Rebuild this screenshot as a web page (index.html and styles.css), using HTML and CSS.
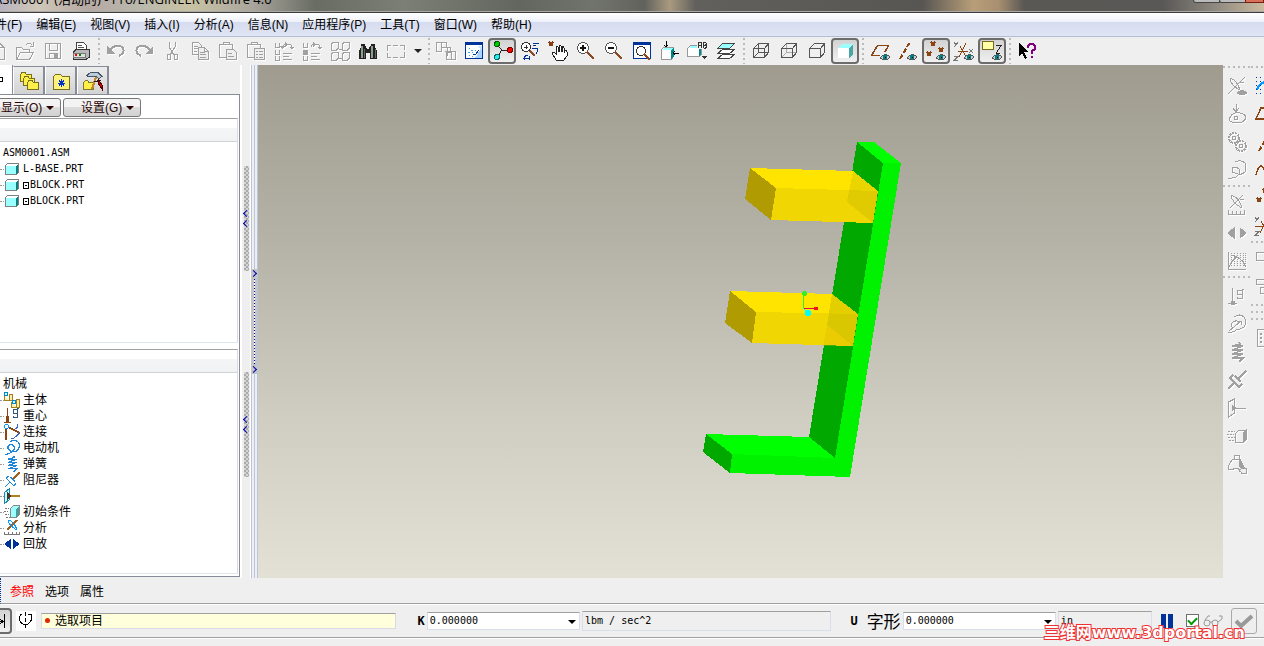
FILE: index.html
```
<!DOCTYPE html>
<html lang="zh-CN">
<head>
    <meta charset="UTF-8">
    <meta name="viewport" content="width=device-width, initial-scale=1.0">
    <title>ASM0001 (活动的) - Pro/ENGINEER Wildfire 4.0</title>
    <link rel="stylesheet" href="styles.css">
</head>
<body>
    <!-- Shared symbols -->
    <svg class="symbols" aria-hidden="true">
        <symbol id="eye" viewBox="0 0 10 7"><path d="M0 4Q5-2 10 3Q6 8 0 4Z" fill="#ccc" stroke="#555"/><path d="M3 1h4v4H3z" fill="#008080"/><path d="M5 3h1v1H5z" fill="#000"/></symbol>
        <symbol id="part" viewBox="0 0 14 12"><path d="M.5 2.500L2.500.5H13.500V9.500L11.500 11.500H.5z" fill="#fff" stroke="#808080"/><path d="M1 3h10v8H1z" fill="#9ff" /><path d="M11 3l2-2v8l-2 2z" fill="#0a7f80"/></symbol>
        <symbol id="folder" viewBox="0 0 12 10"><path d="M.5 9.500V2.500L2 .5H5L6.500 2.500H11.500V9.500z" fill="#ffef4a" stroke="#77701a"/></symbol>
        <symbol id="damper" viewBox="0 0 20 20"><path d="M1 19L8 12M6 5L3 8L12 17L15 14M8 6L14 12M11 9L19 1" fill="none" stroke="currentColor" stroke-width="1.500"/></symbol>
        <symbol id="spring" viewBox="0 0 20 20"><path d="M12 0L13 2L5 4H16L5 8H16L5 12H16L5 16H16L12 20" fill="none" stroke="currentColor" stroke-width="1.500"/></symbol>
        <symbol id="motor" viewBox="0 0 20 20"><path d="M8 2Q14-1 18 3Q21 8 17 13Q13 16 9 14Q4 12 5 8Q8 4 12 7Q15 11 11 13Q8 18 1 18" fill="none" stroke="currentColor" stroke-width="1.500"/></symbol>
    </svg>

    <header class="title-bar">
        <span class="title-text">ASM0001 (活动的) - Pro/ENGINEER Wildfire 4.0</span>
        <span class="window-buttons"><i></i><i></i><i></i></span>
    </header>

    <nav class="menu-bar">
        <a href="#">文件(F)</a>
        <a href="#">编辑(E)</a>
        <a href="#">视图(V)</a>
        <a href="#">插入(I)</a>
        <a href="#">分析(A)</a>
        <a href="#">信息(N)</a>
        <a href="#">应用程序(P)</a>
        <a href="#">工具(T)</a>
        <a href="#">窗口(W)</a>
        <a href="#">帮助(H)</a>
    </nav>

    <div class="toolbar">
        <button class="tool off" aria-label="新建"><svg viewBox="0 0 20 20"><path d="M4 1.500h8l5 5v12H4zM12 1.500v5h5"/></svg></button>
        <button class="tool off" aria-label="打开"><svg viewBox="0 0 20 20"><path d="M1.500 18.500v-12h5l2 2h6v3M1.500 18.500l4-7h13l-4 7zM11 4q3-3 6 0M18.500 1v4h-4"/></svg></button>
        <button class="tool off" aria-label="保存"><svg viewBox="0 0 20 20"><path d="M2.500 2.500h15v15h-15zM6 2.500v7h8v-7M6 17.500v-5h8v5"/><path d="M11 13h3v4h-3z" fill="#a0a0a0"/></svg></button>
        <button class="tool" aria-label="打印"><svg viewBox="0 0 20 20"><path d="M5.500 9V1.500h7l3 3V9" fill="#fff" stroke="#444"/><path d="M7 4.500h4M7 6.500h6" stroke="#555"/><path d="M2.500 11l3-3h13v8l-3 2h-13z" fill="#b8b8b8" stroke="#333"/><path d="M2 12h12v4H2z" fill="#e0e0e0" stroke="#777"/><path d="M4 14h2" stroke="red" stroke-width="2"/><path d="M8 14h2" stroke="#080" stroke-width="2"/></svg></button>
        <span class="grip"></span>
        <button class="tool off" aria-label="撤消"><svg viewBox="0 0 20 20"><path d="M4 9Q8 4 14 5Q19 7 17 12L13 15" stroke-width="2"/><path d="M1 5v8h8z" fill="#a0a0a0" stroke="none"/></svg></button>
        <button class="tool off" aria-label="重做"><svg viewBox="0 0 20 20"><path d="M16 9Q12 4 6 5Q1 7 3 12L7 15" stroke-width="2"/><path d="M19 5v8h-8z" fill="#a0a0a0" stroke="none"/></svg></button>
        <button class="tool off" aria-label="剪切"><svg viewBox="0 0 20 20"><path d="M7 1v5l5 8M13 1v5l-5 8M5.500 13.500h3v5h-3zM12.500 13.500h3v5h-3z"/></svg></button>
        <button class="tool off" aria-label="复制"><svg viewBox="0 0 20 20"><path d="M2.500 1.500h6l3 3v9h-9zM4 5h4M4 7.500h4M4 10h3"/><path d="M8.500 6.500h6l4 4v8h-10zM10 11h5M10 13.500h6M10 16h6M14.500 6.500v4h4" fill="#efefef"/></svg></button>
        <button class="tool off" aria-label="粘贴"><svg viewBox="0 0 20 20"><path d="M1.500 3.500h13v13h-13zM5 3V1h6v2"/><path d="M8.500 8.500h7l3 3v7h-10zM10 12h4M10 15h6" fill="#efefef"/></svg></button>
        <button class="tool off" aria-label="选择性粘贴"><svg viewBox="0 0 20 20"><path d="M1.500 3.500h13v13h-13zM5 3V1h6v2"/><path d="M8.500 7.500h10v11h-10zM10 10h2M13 10h4M10 13h2M13 13h4M10 16h2M13 16h4" fill="#efefef"/></svg></button>
        <button class="tool off" aria-label="再生"><svg viewBox="0 0 20 20"><path d="M1 2v4h4V2M1 9v4h4V9M1 15v4h4v-4M9 12h9M9 15h6M9 18h9M9 6q1-4 4-3M14 3q4 0 4 4"/><path d="M11 1l3 2-3 3zM15 6h5l-2 3zM6 5h5l-3 3z" fill="#a0a0a0" stroke="none"/></svg></button>
        <button class="tool off" aria-label="再生管理器"><svg viewBox="0 0 20 20"><path d="M1 2v4h4V2M1 9v4h4V9M1 15v4h4v-4M9 12h9M9 15h6M9 18h9M9 6q1-4 4-3M14 3q4 0 4 4"/><path d="M11 1l3 2-3 3zM15 6h5l-2 3zM1 9h4v4H1z" fill="#a0a0a0" stroke="none"/></svg></button>
        <button class="tool off" aria-label="重复元件"><svg viewBox="0 0 20 20"><path d="M1.500 3l2-2h5v6l-2 2h-5zM12.500 3l2-2h5v6l-2 2h-5zM1.500 13l2-2h5v6l-2 2h-5zM12.500 13l2-2h5v6l-2 2h-5zM9 8h3M9 17h3"/></svg></button>
        <button class="tool" aria-label="查找"><svg viewBox="0 0 20 20"><path d="M3 3h4v2h1l1 3h2l1-3h1V3h4v3l2 4v8h-7v-6H8v6H1v-8l2-4z" fill="#222"/><path d="M4 5v12M14 5v12" stroke="#8aa08a" stroke-width="2"/><path d="M6 8v9M17 8v9" stroke="#666"/></svg></button>
        <button class="tool off" aria-label="选取"><svg viewBox="0 0 20 20"><path d="M1 4.500h4M7 4.500h5M14 4.500h4.500v4M18.500 11v5.500H14M12 16.500H7M5 16.500H1.500V12M1.500 10V4"/></svg></button>
        <button class="tool-caret" aria-label="选取选项"><span class="caret"></span></button>
        <span class="grip"></span>
        <button class="tool off" aria-label="主体"><svg viewBox="0 0 20 20"><path d="M.5 1.500h5v9h-5zM5.500 1.500h5v5h-5zM9 10.500h5v-4h-3v8M14 10.500h5v8h-9v-7h5v7"/></svg></button>
        <button class="tool" aria-label="草绘视图"><svg viewBox="0 0 20 20"><path d="M1.500 1.500h17v16h-17z" fill="#fff" stroke="#039" /><path d="M11 17L18 6v11z" fill="#a8d4ff"/><path d="M2 5h16v5L14 5z" fill="#c8e4ff"/><path d="M1 1h18v3H1z" fill="#003399"/><path d="M5 7h1M7 9h2M4 11h2M8 11h1M11 9h1M5 14h1M8 15h1" stroke="#3ad"/><path d="M9 14l3-1 3-4" fill="none" stroke="#039"/></svg></button>
        <button class="tool pressed" aria-label="旋转中心"><svg viewBox="0 0 20 20"><path d="M5 4l5 5M9 9.500h7M9 10l-4 7" stroke="#222"/><circle cx="5" cy="3" r="2.500" fill="#0c0" stroke="#050"/><circle cx="18" cy="9" r="2.500" fill="#f00" stroke="#700"/><circle cx="5" cy="16" r="2.500" fill="#2ee" stroke="#166"/></svg></button>
        <button class="tool" aria-label="定向模式"><svg viewBox="0 0 20 20"><circle cx="6" cy="6" r="4.500" fill="#fff" stroke="#333"/><path d="M6 4v4M4 6h4" stroke="#333"/><path d="M10 10l5 5" stroke="#8b4a24" stroke-width="2"/><path d="M13 2.500h6M13 4.500h3M12 7.500h5q2 2-1 5M8 14q-5 1-3 5M3 17h6M9 19v-4" fill="none" stroke="#039"/></svg></button>
        <button class="tool" aria-label="平移"><svg viewBox="0 0 20 20"><path d="M8 19L4 12q1-2 4 1V6q1-2 2 0l1 5V5q1-2 2 0l1 6V6q2-1 2 1v5l1-3q2 0 2 2v4l-3 4z" fill="#fff" stroke="#222"/><path d="M1 1l4 4M5 1L1 5" stroke="#8b3a10" stroke-width="1.500"/></svg></button>
        <button class="tool" aria-label="放大"><svg viewBox="0 0 20 20"><circle cx="7" cy="7" r="5.500" fill="#fff" stroke="#555"/><path d="M4 7h6M7 4v6" stroke="#111" stroke-width="2"/><path d="M11 11l7 7" stroke="#8b4a24" stroke-width="2"/></svg></button>
        <button class="tool" aria-label="缩小"><svg viewBox="0 0 20 20"><circle cx="7" cy="7" r="5.500" fill="#fff" stroke="#555"/><path d="M4 7h6" stroke="#111" stroke-width="2"/><path d="M11 11l7 7" stroke="#8b4a24" stroke-width="2"/></svg></button>
        <button class="tool" aria-label="重新调整"><svg viewBox="0 0 20 20"><path d="M1.500 1.500h17v16h-17z" fill="#fff" stroke="#039"/><path d="M1 1h18v3H1z" fill="#003399"/><circle cx="9" cy="10" r="4.500" fill="#fff" stroke="#333"/><path d="M12 13l6 6" stroke="#8b4a24" stroke-width="2"/></svg></button>
        <button class="tool" aria-label="重定向"><svg viewBox="0 0 20 20"><path d="M1.500 8.500l2-2h10v9l-2 3h-10z" fill="#fff" stroke="#999"/><path d="M4 7h9l-1 2H2z" fill="#9ff"/><path d="M11 9l3-3v9l-3 3z" fill="#088"/><path d="M6 0v6M4 4l2 2 2-2M19 12h-6M15 10l-2 2 2 2" fill="none" stroke="#000"/></svg></button>
        <button class="tool" aria-label="已命名视图"><svg viewBox="0 0 20 20"><path d="M-.5 7.500l3-3h11v9l-2 2H-.5z" fill="#fff" stroke="#999"/><path d="M2 6h9" stroke="#9ff" stroke-width="2"/><path d="M11 7h2v6l-2 2z" fill="#088"/><path d="M9 0h11v8H9z" fill="#efefef"/><path d="M10.500 7V2l1-1h1l1 1v5M10.500 4.500h3M15.500 6.500v-5h2l1 1v1l-1 .5 1 1v1l-1 1h-2M15.500 4h2" fill="none" stroke="#333"/><path d="M14 15h5l-2.500 3z" fill="#333"/></svg></button>
        <button class="tool" aria-label="层"><svg viewBox="0 0 20 20"><path d="M1.500 17.500l5-4h12l-5 4z" fill="#fff" stroke="#444"/><path d="M1.500 12.500l5-4h12l-5 4z" fill="#fff" stroke="#444"/><path d="M1.500 7.500l5-5h12l-5 5z" fill="#9ff" stroke="#444"/></svg></button>
        <span class="grip"></span>
        <button class="tool" aria-label="线框"><svg viewBox="0 0 20 20"><path d="M2.500 7.500h11v9h-11zM7.500 2.500h10v9h-10zM2.500 7.500l5-5M13.500 7.500l4-5M13.500 16.500l4-5M2.500 16.500l5-5" fill="none" stroke="#555"/></svg></button>
        <button class="tool" aria-label="隐藏线"><svg viewBox="0 0 20 20"><path d="M7.500 3v8.500h10M2.500 16.500l5-5" fill="none" stroke="#aaa"/><path d="M2.500 7.500h11v9h-11zM2.500 7.500l5-5h10v9l-4 5M13.500 7.500l4-5" fill="none" stroke="#555"/></svg></button>
        <button class="tool" aria-label="无隐藏线"><svg viewBox="0 0 20 20"><path d="M2.500 7.500h11v9h-11zM2.500 7.500l5-5h10v9l-4 5M13.500 7.500l4-5" fill="none" stroke="#555"/></svg></button>
        <button class="tool pressed" aria-label="着色"><svg viewBox="0 0 20 20"><path d="M3 7h11v10H3z" fill="#fff"/><path d="M3 7l4-4h11l-4 4z" fill="#9ff"/><path d="M14 7l4-4v10l-4 4z" fill="#4aa6a6"/></svg></button>
        <span class="grip"></span>
        <button class="tool" aria-label="平面显示"><svg viewBox="0 0 20 20"><path d="M10 14.500H1.500l6-10h11L15 11" fill="none" stroke="#8b4513" stroke-width="1.500"/><use href="#eye" x="10" y="13" width="10" height="7"/></svg></button>
        <button class="tool" aria-label="轴显示"><svg viewBox="0 0 20 20"><path d="M2 18L12 1" stroke="#8b4513" stroke-width="2" stroke-dasharray="5 2"/><use href="#eye" x="9" y="13" width="10" height="7"/></svg></button>
        <button class="tool pressed" aria-label="点显示"><svg viewBox="0 0 20 20"><path d="M5 1l4 4M9 1L5 5M1 11l4 4M5 11l-4 4M13 7l4 4M17 7l-4 4" stroke="#8b4513" stroke-width="1.500"/><use href="#eye" x="10" y="13" width="10" height="7"/></svg></button>
        <button class="tool" aria-label="坐标系显示"><svg viewBox="0 0 20 20"><path d="M4 10.500h10M6 5l6 11M12 2L5 16" stroke="#8b4513"/><path d="M0 1l2 3 2-3M2 4l-2 2M0 15.500h4l-4 4h4M15 8l4 4M19 8l-4 4" fill="none" stroke="#777"/><use href="#eye" x="10" y="13" width="10" height="7"/></svg></button>
        <button class="tool pressed" aria-label="注释显示"><svg viewBox="0 0 20 20"><path d="M.5.5h11v8H.5z" fill="#ffffa8" stroke="#776a1a"/><path d="M14 4.500h5l-5 8M14 12.500h4" fill="none" stroke="#222"/><use href="#eye" x="10" y="13" width="10" height="7"/></svg></button>
        <span class="grip"></span>
        <button class="tool" aria-label="上下文帮助"><svg viewBox="0 0 20 20"><path d="M2 2v13l3-3 3 6 2-1-3-6h4z" fill="#000"/><path d="M11 7V5l2-2h3l2 2v3l-3 2v3M15 15v2" fill="none" stroke="#800080" stroke-width="2"/></svg></button>
    </div>

    <main class="workspace">
        <aside class="navigator">
            <div class="nav-tabs">
                <button class="nav-tab active" aria-label="模型树"><i></i></button>
                <button class="nav-tab" aria-label="文件夹浏览器"><svg viewBox="0 0 20 20"><use href="#folder" x="1" y="1" width="12" height="10"/><use href="#folder" x="4" y="5" width="12" height="10"/><use href="#folder" x="8" y="9" width="12" height="10"/></svg></button>
                <button class="nav-tab" aria-label="收藏夹"><svg viewBox="0 0 20 20"><path d="M2.500 18.500v-13l2-2h5l2 2h7v13z" fill="#fff27a" stroke="#77701a"/><path d="M10.500 8v8M7 12h7M8 9.500l5 5M13 9.500l-5 5" stroke="#03c"/></svg></button>
                <button class="nav-tab" aria-label="连接"><svg viewBox="0 0 20 20"><use href="#folder" x="0" y="9" width="11" height="10"/><path d="M13 6L9 18" stroke="#c8862a" stroke-width="2"/><path d="M11 11l7-2" stroke="#222"/><path d="M15 8l4 6v4l-4-6z" fill="#c00" stroke="#500"/><path d="M4 4.500q2-3 6-3h5l4 4-3 2-3-2H9L5 6z" fill="#bcd" stroke="#456"/></svg></button>
            </div>
            <div class="nav-body">
                <div class="nav-buttons">
                    <button>显示(O)<span class="caret"></span></button>
                    <button>设置(G)<span class="caret"></span></button>
                </div>
                <section class="tree-box">
                    <div class="tree-head"></div>
                    <ul class="tree model-tree">
                        <li class="root">ASM0001.ASM</li>
                        <li><svg viewBox="0 0 16 16"><use href="#part" x="1" y="2" width="14" height="12"/></svg>L-BASE.PRT</li>
                        <li><svg viewBox="0 0 16 16"><use href="#part" x="1" y="2" width="14" height="12"/></svg><i class="packaged"></i>BLOCK.PRT</li>
                        <li><svg viewBox="0 0 16 16"><use href="#part" x="1" y="2" width="14" height="12"/></svg><i class="packaged"></i>BLOCK.PRT</li>
                    </ul>
                </section>
                <section class="tree-box">
                    <div class="tree-head"></div>
                    <ul class="tree">
                        <li class="root">机械</li>
                        <li><svg viewBox="0 0 16 16"><path d="M.5 4v4.500h5M5.500 2.500h3v6h-3zM7.500 10v5.500h8v-8h-3v8" fill="#fff0a0" stroke="#a08020"/><path d="M.5.5h3v3h-3zM8.500 8.500h3v3h-3z" fill="#dff" stroke="#08c"/></svg>主体</li>
                        <li><svg viewBox="0 0 16 16"><path d="M3.500 0v14M0 14.500h7" stroke="#8b4513"/><path d="M2 8h3v6H2z" fill="#8b4513"/><path d="M9.500 1.500h4v4h-4zM14.500.5h-1v9h-4v-2" fill="none" stroke="#357"/></svg>重心</li>
                        <li><svg viewBox="0 0 16 16"><path d="M2 3v13M2 2l14 7" stroke="#8b4513" stroke-width="1.500"/><path d="M15 8q-1 5-8 7M13 0q2 3-2 5" fill="none" stroke="#36c"/><circle cx="2.500" cy="2.500" r="2" fill="#fff" stroke="#09f"/></svg>连接</li>
                        <li class="blue"><svg viewBox="0 0 16 16"><use href="#motor" width="16" height="16"/></svg>电动机</li>
                        <li class="blue"><svg viewBox="0 0 16 16"><use href="#spring" width="16" height="16"/></svg>弹簧</li>
                        <li class="blue"><svg viewBox="0 0 16 16"><use href="#damper" width="16" height="16"/><path d="M9 7l7-7" stroke="#a06020" stroke-width="1.500"/></svg>阻尼器</li>
                        <li><svg viewBox="0 0 16 16"><path d="M.5 4.500l5-4v11l-5 4z" fill="#bff" stroke="#28a"/><path d="M4 8h12" stroke="#b08020" stroke-width="2"/><path d="M3 4v8l4-4z" fill="#532"/></svg></li>
                        <li><svg viewBox="0 0 16 16"><path d="M1 4.500h4M0 7.500h4M1 10.500h4M2 13.500h4" stroke="#777" stroke-dasharray="2 1"/><path d="M6.500 4.500l3-3h6v9l-3 3h-6z" fill="#9ff" stroke="#888"/><path d="M12 5l3-3v8l-3 3z" fill="#4a9a9a"/></svg>初始条件</li>
                        <li><svg viewBox="0 0 16 16"><path d="M3 10L13 0" stroke="#a06020" stroke-width="1.500"/><path d="M4 0q1 6 9 10M4 0q6 1 9 10" fill="none" stroke="#09f"/><path d="M.5 12v2.500h15V12M4.500 12v2M8.500 12v2M12.500 12v2" fill="none" stroke="#777"/></svg>分析</li>
                        <li><svg viewBox="0 0 16 16"><path d="M7 3v10L0 8zM9 3v10l7-5z" fill="#003399"/></svg>回放</li>
                    </ul>
                </section>
            </div>
        </aside>

        <div class="splitter">
            <div class="split-grip"><i></i><i></i></div>
            <div class="split-grip"><i></i><i></i></div>
        </div>
        <div class="sash">
            <div class="sash-grip"><i></i><b></b><i></i></div>
        </div>

        <div class="viewport">
            <svg class="model" viewBox="0 0 965 513" preserveAspectRatio="xMidYMid meet">
                <g transform="translate(432 65)">
                    <!-- L base -->
                    <path d="M167 12L193 33L145 328L119 307z" fill="#00a800"/>
                    <path d="M167 12H184L211 33H193z" fill="#00ff00"/>
                    <path d="M16 304L119 307L145 328L42 324z" fill="#00ff00"/>
                    <path d="M16 304L42 324L40 343L13 322z" fill="#00a800"/>
                    <path d="M193 33H211L160 347L40 343L42 324L145 328z" fill="#00f200"/>
                    <!-- Upper block -->
                    <path d="M60 38L163 41L188 61L86 58z" fill="#ffe400"/>
                    <path d="M86 58L188 61L183 93L81 90z" fill="#f0d704"/>
                    <path d="M60 38L86 58L81 90L55 69z" fill="#b09b03"/>
                    <path d="M163 41L188 61L183 93L157 72z" fill="#b0a800" fill-opacity=".25"/>
                    <!-- Lower block -->
                    <path d="M40 161L142 164L168 184L66 182z" fill="#ffe400"/>
                    <path d="M66 182L168 184L163 216L62 213z" fill="#f0d704"/>
                    <path d="M40 161L66 182L62 213L35 193z" fill="#b09b03"/>
                    <path d="M142 164L168 184L163 216L137 195z" fill="#b0a800" fill-opacity=".35"/>
                    <path d="M137 195L163 216H133z" fill="#e0b000" fill-opacity=".3"/>
                    <!-- Spin center -->
                    <path d="M113 178L114 164" stroke="#30f020"/>
                    <path d="M113 178.500H126" stroke="#e01030"/>
                    <path d="M113 178L118 183" stroke="#00ffff"/>
                    <circle cx="114.500" cy="163.500" r="2.500" fill="#30f020"/>
                    <circle cx="126" cy="178.500" r="2" fill="#f01020"/>
                    <circle cx="118" cy="183" r="3" fill="#00ffff"/>
                </g>
            </svg>
        </div>

        <div class="side-tools">
            <div class="side-column">
                <span class="grip-row"></span>
                <button class="tool off" aria-label="机构显示"><svg viewBox="0 0 20 20"><path d="M1 18L17 2M3 2q1 8 10 12M3 2q7 2 10 12M13 6h4M15 4l3-3"/><path d="M10 17q5-5 10 0q-5 4-10 0z" fill="#a0a0a0"/></svg></button>
                <button class="tool off" aria-label="凸轮"><svg viewBox="0 0 20 20"><path d="M9 0v8M6 4l3 4 3-4M4 12q2-4 9-3q6 1 6 5q-2 5-9 5q-7 0-8-4z"/><circle cx="9" cy="14" r="2"/></svg></button>
                <button class="tool off" aria-label="齿轮"><svg viewBox="0 0 20 20"><circle cx="7" cy="6" r="5" stroke-width="2" stroke-dasharray="2 1"/><circle cx="7" cy="6" r="2"/><circle cx="14" cy="14" r="5" stroke-width="2" stroke-dasharray="2 1"/><circle cx="14" cy="14" r="2"/></svg></button>
                <button class="tool off" aria-label="伺服电动机"><svg viewBox="0 0 20 20"><path d="M8 2Q14-1 18 3Q20 8 18 12Q15 15 12 14Q9 19 1 18M5 8Q9 6 12 9Q14 12 12 14M5 8v4l6 2"/></svg></button>
                <span class="grip-row"></span>
                <button class="tool off" aria-label="机构分析"><svg viewBox="0 0 20 20"><path d="M3 13L16 0M4 0q1 8 11 13M4 0q8 2 11 13M13 4h4"/><path d="M1.500 15v4h16v-4M5.500 16v3M9.500 16v3M13.500 16v3"/></svg></button>
                <button class="tool off" aria-label="回放"><svg viewBox="0 0 20 20"><path d="M7 5v10L1 10zM13 5v10l6-5z" fill="#a0a0a0"/></svg></button>
                <button class="tool off" aria-label="测量"><svg viewBox="0 0 20 20"><path d="M1.500 1v17.500H19"/><path d="M4.500 2v14M7.500 2v14M10.500 2v14M13.500 2v14M16.500 2v14M18.500 2v14" stroke-dasharray="1 1"/><path d="M2 16Q8 4 12 7t7 9M4 4q9 2 14 9"/></svg></button>
                <span class="grip-row"></span>
                <button class="tool off" aria-label="重力"><svg viewBox="0 0 20 20"><path d="M5.500 2v16M1 17.500h9"/><path d="M4 15h3v3H4z" fill="#a0a0a0"/><path d="M10.500 4.500h5v4h-5zM17 3.500h-1.500v9h-5v-2"/></svg></button>
                <button class="tool off" aria-label="执行电动机"><svg viewBox="0 0 20 20"><path d="M7 3Q13-1 17 3Q21 8 17 13Q13 16 10 15Q7 19 1 18M4 10Q8 5 12 8M4 10v3M2 17l12-10M10 7h4v4"/></svg></button>
                <button class="tool off" aria-label="弹簧"><svg viewBox="0 0 20 20"><use href="#spring" width="20" height="20"/></svg></button>
                <button class="tool off" aria-label="阻尼器"><svg viewBox="0 0 20 20"><use href="#damper" width="20" height="20"/></svg></button>
                <button class="tool off" aria-label="力/扭矩"><svg viewBox="0 0 20 20"><path d="M1.500 4l6-3v14l-6 4zM5 10h14"/><path d="M5 7v6l4-3z" fill="#a0a0a0"/></svg></button>
                <button class="tool off" aria-label="初始条件"><svg viewBox="0 0 20 20"><path d="M1 5.500h7M0 8.500h7M1 11.500h7M2 14.500h7" stroke-dasharray="2 1"/><path d="M8.500 7.500l3-3h8v9l-3 3h-8z"/><path d="M16 7l3-3v10l-3 3z" fill="#a0a0a0"/></svg></button>
                <button class="tool off" aria-label="质量属性"><svg viewBox="0 0 20 20"><path d="M7 5V1h5v4M6 5h7l4 8-4 5-2-4-9 2q-2-4 4-11z"/><path d="M12 5l5 8h-4z" fill="#a0a0a0"/><path d="M12.500 16l3-2h4v5h-5z" fill="#efefef"/></svg></button>
            </div>
            <div class="side-column">
                <span class="grip-row"></span>
                <button class="tool" aria-label="草绘"><svg viewBox="0 0 20 20"><path d="M2 14Q4 5 18 5" fill="none" stroke="#09f" stroke-width="2"/><path d="M1.500 1v18M5.500 1v18" stroke="#03a" stroke-dasharray="1 3" fill="none"/></svg></button>
                <button class="tool" aria-label="平面"><svg viewBox="0 0 20 20"><path d="M1 15L6 4h13l-5 11z" fill="none" stroke="#8b4513" stroke-width="1.500"/></svg></button>
                <button class="tool" aria-label="轴"><svg viewBox="0 0 20 20"><path d="M4 19L14 1" stroke="#8b4513" stroke-width="2" stroke-dasharray="5 2"/></svg></button>
                <button class="tool" aria-label="曲线"><svg viewBox="0 0 20 20"><path d="M1 15q4-16 9-4t9-5" fill="none" stroke="#8b4513" stroke-width="1.500"/></svg></button>
                <button class="tool" aria-label="点"><svg viewBox="0 0 20 20"><path d="M2 10l4 4M6 10l-4 4M8 1l4 4M12 1L8 5" stroke="#8b4513" stroke-width="1.500"/></svg></button>
                <button class="tool" aria-label="坐标系"><svg viewBox="0 0 20 20"><path d="M0 10.500h18M6 5l6 12M12 2L5 17" stroke="#8b4513"/><path d="M0 1l2 3 2-3M2 4l-2 2M0 15.500h4l-4 4h4" fill="none" stroke="#777"/></svg></button>
                <span class="grip-row"></span>
                <button class="tool off" aria-label="装配"><svg viewBox="0 0 20 20"><path d="M1.500 1.500h17v8h-17z"/></svg></button>
                <button class="tool off" aria-label="创建"><svg viewBox="0 0 20 20"><path d="M1.500.5h17v5h-17zM5.500 8.500h10v6h-10z"/></svg></button>
                <span class="grip-row"></span>
                <span class="grip-row"></span>
                <span class="grip-row"></span>
                <button class="tool off" aria-label="阵列"><svg viewBox="0 0 20 20"><path d="M2.500 1.500h16v17h-16z"/><path d="M6 5v12M10 5v12" stroke-width="2" stroke-dasharray="2 2"/></svg></button>
            </div>
        </div>
    </main>

    <div class="panel-tabs">
        <a class="current" href="#">参照</a>
        <a href="#">选项</a>
        <a href="#">属性</a>
    </div>

    <footer class="dashboard">
        <button class="tool pressed" aria-label="平移轴"><svg viewBox="0 0 20 20"><path d="M16.500 3v14M8 10.500h7M12 8l3 2.500-3 2.500" fill="none" stroke="#000"/></svg></button>
        <button class="rotate" aria-label="旋转轴"><svg viewBox="0 0 20 20"><path d="M6 3Q2 5 4 10Q7 15 12 13Q17 10 15 3M12 3.500h3.500v4" fill="none" stroke="#000"/><path d="M9.500 1v18" stroke="#000" stroke-dasharray="4 2"/></svg></button>
        <div class="message"><i></i>选取项目</div>

        <label class="symbol k" for="stiffness">K</label>
        <div class="combo"><select id="stiffness"><option>0.000000</option></select></div>
        <input class="unit wide" type="text" value="lbm / sec^2" aria-label="刚度单位" readonly>

        <label class="symbol u" for="length">U <span>字形</span></label>
        <div class="combo"><select id="length"><option>0.000000</option></select></div>
        <input class="unit" type="text" value="in" aria-label="长度单位" readonly>

        <button class="pause" aria-label="暂停"></button>
        <input class="preview" type="checkbox" id="preview" checked>
        <label class="glasses" for="preview" aria-label="预览"><svg viewBox="0 0 20 12"><circle cx="4" cy="8" r="3"/><circle cx="12" cy="8" r="3"/><path d="M7 7h2M2 5l3-4h2M15 7l4-3V1h-3"/></svg></label>
        <button class="accept" aria-label="确定"><svg viewBox="0 0 20 20"><path d="M2 10l5 5L18 5" fill="none" stroke="#999" stroke-width="4"/></svg></button>

        <a class="watermark" href="#">三维网www.3dportal.cn</a>
    </footer>
    <div class="status-bar"></div>
</body>
</html>
```
FILE: styles.css
```
/* General styles */
* {
    box-sizing: border-box;
}

body {
    margin: 0;
    height: 100vh;
    display: flex;
    flex-direction: column;
    overflow: hidden;
    background: #efefef;
    color: #000;
    font: 12px/16px "Liberation Sans", "Noto Sans CJK SC", sans-serif;
}

a {
    color: inherit;
    text-decoration: none;
}

button {
    margin: 0;
    padding: 0;
    border: 0;
    background: none;
    color: inherit;
    font: inherit;
}

.symbols {
    position: absolute;
    width: 0;
    height: 0;
}

.caret {
    width: 0;
    height: 0;
    border: 4px solid transparent;
    border-top-color: currentColor;
    border-bottom: 0;
}

/* Title bar */
.title-bar {
    flex: none;
    display: flex;
    justify-content: space-between;
    height: 13px;
    overflow: hidden;
    border-bottom: 1px solid #3c3c3c;
    box-shadow: inset 0 -1px #aaa9a5;
    background: linear-gradient(90deg, #b9b3c0 0, #cfc7b8 3%, #b6a9a4 7%, #b8b8ac 11%, #c9c3a4 15%, #a9a59c 20%, #686c63 25%, #7c7f76 32%, #62665e 41%, #71746c 47%, #62625d 51%, #a99a80 53%, #62605d 55%, #585653 73%, #b89e78 77%, #a88f70 79%, #5a5854 81%, #5a5856 92%, #8c877e 96%, #cdbba0 100%);
}

.title-text {
    margin: -9px 0 0 -6px;
    white-space: nowrap;
    font-family: "Open Sans", "Noto Sans CJK SC", sans-serif;
    font-size: 13px;
}

.window-buttons {
    display: flex;
    height: 3px;
}

.window-buttons i {
    width: 27px;
    border: 1px solid #444;
    border-top: 0;
    border-radius: 0 0 0 3px;
    background: #bbb;
}

.window-buttons i:last-child {
    width: 19px;
    border-color: #7a1c10;
    border-radius: 0;
    background: #d9705a;
}

.window-buttons i + i {
    margin-left: -1px;
}

/* Menu bar */
.menu-bar {
    flex: none;
    display: flex;
    align-items: center;
    gap: 14px;
    height: 24px;
    margin-left: -17px;
    border-bottom: 1px solid #b4bed2;
    background: linear-gradient(#fff 0, #eef1f9 38%, #d6dcef 40%, #e0e5f5 100%);
}

.menu-bar a {
    white-space: nowrap;
}

/* Toolbars */
.toolbar {
    flex: none;
    display: flex;
    align-items: center;
    height: 28px;
    margin-left: -17px;
}

.tool {
    flex: none;
    display: flex;
    align-items: center;
    justify-content: center;
    width: 28px;
    height: 28px;
    border-radius: 4px;
}

.tool svg {
    width: 20px;
    height: 20px;
    overflow: visible;
    shape-rendering: crispEdges;
}

.tool.off {
    color: #a0a0a0;
}

.tool.off svg {
    fill: none;
    stroke: #a0a0a0;
    filter: drop-shadow(1px 1px 0 #fff);
}

.tool.pressed {
    height: 26px;
    border: 2px solid #6c6c6c;
    background: linear-gradient(#d2d2d2, #f0f0f0);
}

.tool-caret {
    flex: none;
    width: 15px;
    display: flex;
    justify-content: center;
    color: #222;
}

.grip {
    flex: none;
    width: 7px;
    height: 26px;
    background: repeating-linear-gradient(#bbb 0 2px, transparent 2px 5px) center / 2px 100% no-repeat;
}

.grip-row {
    flex: none;
    width: 28px;
    height: 7px;
    background: repeating-linear-gradient(90deg, #bbb 0 2px, transparent 2px 5px) 0 1px / 100% 2px no-repeat;
}

/* Workspace */
.workspace {
    flex: 1;
    min-height: 0;
    display: grid;
    grid-template-columns: 240px 11px 7px 1fr 41px;
}

/* Navigator */
.navigator {
    display: flex;
    flex-direction: column;
    min-height: 0;
    padding-bottom: 1px;
}

.nav-tabs {
    flex: none;
    display: flex;
    align-items: flex-end;
    height: 29px;
}

.nav-tab {
    display: flex;
    align-items: center;
    justify-content: center;
    width: 32px;
    height: 28px;
    border: 1px solid #888c98;
    border-left-color: #fff;
    border-right-width: 2px;
    border-bottom: 0;
    background: linear-gradient(#ececec, #d2d2d2);
}

.nav-tab svg {
    width: 20px;
    height: 20px;
    shape-rendering: crispEdges;
}

.nav-tab.active {
    justify-content: flex-start;
    width: 13px;
    height: 29px;
    border: solid #888c98;
    border-width: 0 1px 0 0;
    background: #fff;
}

.nav-tab.active i {
    width: 3px;
    height: 5px;
    border: 1px solid #000;
    border-left: 0;
}

.nav-body {
    flex: 1;
    min-height: 0;
    display: flex;
    flex-direction: column;
    padding: 3px 1px 2px 0;
    border: solid #888c98;
    border-width: 1px 1px 1px 0;
    background: #fff;
}

.nav-buttons {
    display: flex;
    gap: 2px;
    margin: 0 0 1px -17px;
}

.nav-buttons button {
    display: flex;
    align-items: center;
    justify-content: space-between;
    width: 78px;
    height: 19px;
    padding: 0 6px 0 17px;
    border: 1px solid #777;
    border-radius: 3px;
    background: linear-gradient(#f3f3f3 50%, #dcdcdc 50%, #d2d2d2);
    color: #2a0505;
}

.tree-box {
    flex: 1;
    min-height: 0;
    border: solid #a0a0a0;
    border-width: 1px 1px 1px 0;
    border-right-color: #d8dce2;
    border-bottom-color: #e0e6ee;
}

.tree-box + .tree-box {
    margin-top: 6px;
}

.tree-head {
    height: 23px;
    border-bottom: 1px solid #d0d2d6;
    background: linear-gradient(#fff 9px, #f4f5f6 9px, #f0f2f4);
}

.tree {
    margin: 0;
    padding: 3px 0 0;
    list-style: none;
}

.tree li {
    display: flex;
    align-items: center;
    height: 16px;
    white-space: nowrap;
}

.tree li::before {
    content: "";
    width: 4px;
    border-top: 1px dotted #999;
}

.tree .root {
    padding-left: 3px;
}

.tree .root::before {
    content: none;
}

.tree svg {
    width: 16px;
    height: 16px;
    margin-right: 3px;
    shape-rendering: crispEdges;
}

.tree .blue svg {
    color: #1c86d8;
}

.model-tree {
    font-family: "DejaVu Sans Mono", monospace;
    font-size: 10px;
}

.packaged {
    width: 6px;
    height: 7px;
    margin-right: 1px;
    border: 1px solid #000;
    background: linear-gradient(#000, #000) center / 2px 1px no-repeat;
}

/* Splitters */
.splitter {
    display: flex;
    flex-direction: column;
    align-items: center;
    justify-content: space-evenly;
    padding-left: 1px;
    border-left: 2px solid #fff;
    border-right: 1px solid #fff;
}

.split-grip {
    display: flex;
    flex-direction: column;
    align-items: center;
    justify-content: center;
    gap: 5px;
    width: 5px;
    height: 105px;
    background: repeating-conic-gradient(#aaa 0 25%, #d4d4d4 0 50%) 0 0 / 4px 4px;
}

.split-grip i,
.sash-grip i {
    width: 5px;
    height: 5px;
    border: solid #0000b0;
    border-width: 0 0 1px 1px;
    transform: rotate(45deg);
}

.sash {
    display: flex;
    align-items: center;
    background: linear-gradient(90deg, #b8c6dc 0 1px, #efefef 1px 3px, #b8c6dc 3px 4px, #efefef 4px 6px, #b8c6dc 6px);
}

.sash-grip {
    display: flex;
    flex-direction: column;
    align-items: center;
    width: 6px;
    height: 105px;
    padding: 2px 0;
    background: #c4c4c4;
}

.sash-grip i {
    margin-left: -2px;
    border-width: 1px 1px 0 0;
}

.sash-grip b {
    flex: 1;
    width: 1px;
    margin: 3px 0;
    background: repeating-linear-gradient(#0000a0 0 1px, #fff 1px 3px);
}

/* Graphics area */
.viewport {
    min-width: 0;
    min-height: 0;
    background: linear-gradient(#9f9c8f, #b3b0a5 32%, #cfccc1 68%, #e3e1d5);
}

.model {
    display: block;
    width: 100%;
    height: 100%;
    shape-rendering: crispEdges;
}

.side-tools {
    display: flex;
    min-height: 0;
    overflow: hidden;
}

.side-column {
    flex: none;
    display: flex;
    flex-direction: column;
}

/* Panel tabs */
.panel-tabs {
    flex: none;
    display: flex;
    align-items: center;
    gap: 11px;
    height: 26px;
    padding: 2px 0 0 9px;
    border-left: 1px dotted #003399;
    border-bottom: 1px solid #a0a0a0;
}

.panel-tabs .current {
    color: #f00;
}

/* Dashboard */
.dashboard {
    flex: none;
    position: relative;
    display: flex;
    align-items: center;
    height: 34px;
    padding: 0 7px 1px 0;
    border-top: 1px solid #fff;
    border-bottom: 1px solid #a0a0a0;
}

.dashboard > .tool {
    margin-left: -16px;
}

.rotate {
    flex: none;
    width: 20px;
    height: 20px;
    margin: 0 5px 0 4px;
    background: #fff;
}

.rotate svg {
    display: block;
    shape-rendering: crispEdges;
}

.message {
    flex: 352;
    display: flex;
    align-items: center;
    height: 16px;
    border: 1px solid #d8dce4;
    border-top-color: #a0a0a0;
    background: #ffffdc;
}

.message i {
    width: 5px;
    height: 5px;
    margin: 0 5px 0 3px;
    border-radius: 50%;
    background: #e02800;
}

.symbol {
    display: flex;
    align-items: center;
    font: bold 12px/16px "DejaVu Sans Mono", monospace;
}

.symbol.k {
    margin: 0 2px 0 22px;
}

.symbol.u {
    margin: 0 2px 0 19px;
}

.symbol span {
    margin-left: 9px;
    font: 17px/20px "Noto Sans CJK SC", sans-serif;
}

.combo {
    flex: 153;
    position: relative;
    height: 18px;
}

.combo::after {
    content: "";
    position: absolute;
    right: 4px;
    top: 8px;
    border: 4px solid transparent;
    border-top-color: #000;
    border-bottom: 0;
}

.combo select,
.unit {
    width: 100%;
    height: 18px;
    margin: 0;
    padding: 0 2px;
    appearance: none;
    border: 1px solid #d8dfea;
    border-top-color: #a0a0a0;
    border-radius: 0;
    outline: 0;
    background: #fff;
    color: #000;
    font: 10px/14px "DejaVu Sans Mono", monospace;
}

.combo select {
    display: block;
}

.unit {
    flex: 88;
    min-width: 0;
    height: 20px;
    margin-left: 2px;
    background: #efefef;
}

.unit.wide {
    flex: 243;
}

.pause {
    flex: none;
    width: 12px;
    height: 14px;
    margin: 0 13px 0 9px;
    border: solid #003399;
    border-width: 0 5px;
}

.preview {
    flex: none;
    display: grid;
    place-items: center;
    width: 13px;
    height: 13px;
    margin: 0 4px 0 0;
    appearance: none;
    border: 1px solid #707070;
    background: #fff;
}

.preview:checked::before {
    content: "";
    width: 7px;
    height: 4px;
    margin-bottom: 2px;
    border: solid #090;
    border-width: 0 0 2px 2px;
    transform: rotate(-45deg);
}

.glasses {
    flex: none;
    margin-right: 8px;
}

.glasses svg {
    display: block;
    width: 20px;
    height: 12px;
    fill: none;
    stroke: #999;
}

.accept {
    flex: none;
    display: flex;
    align-items: center;
    justify-content: center;
    width: 26px;
    height: 26px;
    border: 1px solid #aaa;
    border-radius: 3px;
    background: #eee;
}

.accept svg {
    width: 20px;
    height: 20px;
}

.watermark {
    position: absolute;
    right: 19px;
    bottom: -5px;
    color: #fff;
    font: bold 16px/18px "DejaVu Sans", "Noto Sans CJK SC", sans-serif;
    -webkit-text-stroke: 2px #f03030;
    paint-order: stroke fill;
    white-space: nowrap;
}

.status-bar {
    flex: none;
    height: 8px;
    border-top: 1px solid #fff;
}
```
